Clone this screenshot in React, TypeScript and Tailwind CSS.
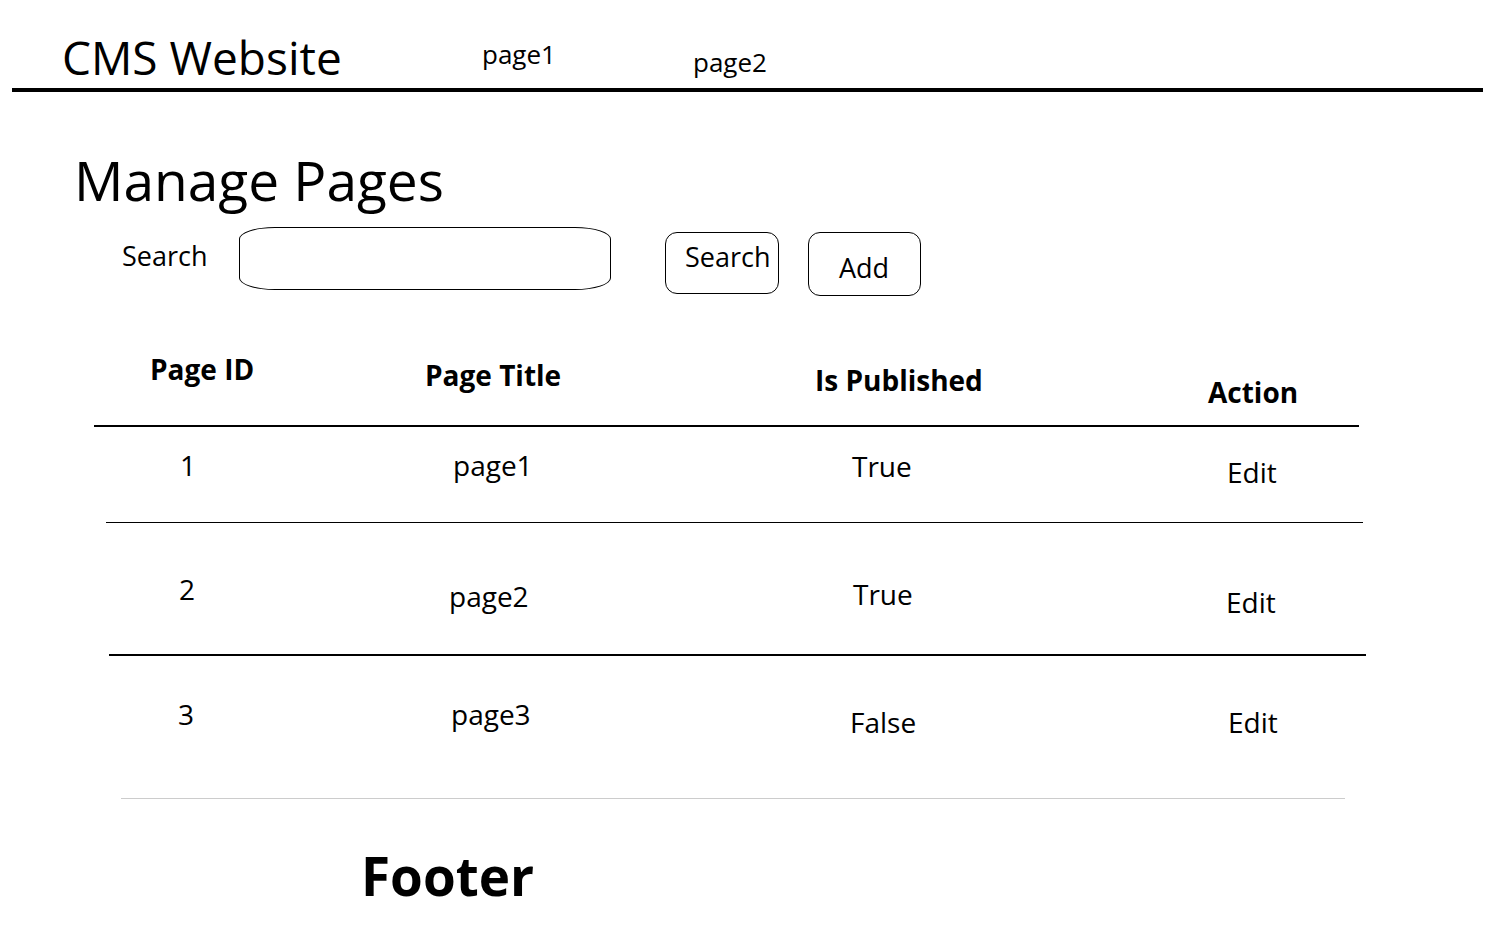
const FONT = { fontFamily: '"Open Sans", "Noto Sans", sans-serif' };

type Cell = { text: string; pl: string; pt: string };

function Row({ cells, height, bold = false }: { cells: Cell[]; height: string; bold?: boolean }) {
  return (
    <div className={`grid grid-cols-[380px_400px_370px_1fr] ${height}`}>
      {cells.map((c, i) => (
        <div key={i} className={`${c.pl} ${c.pt}`}>
          <span className={`text-[28px] leading-none whitespace-nowrap ${bold ? 'font-bold' : ''}`}>{c.text}</span>
        </div>
      ))}
    </div>
  );
}

export default function App() {
  return (
    <div className="w-[1510px] h-[948px] bg-white text-black overflow-hidden" style={FONT}>
      {/* Top bar */}
      <div className="ml-[12px] w-[1471px] h-[92px] border-b-4 border-black flex items-start">
        <div className="w-[470px] pl-[50px] pt-[34px]">
          <span className="text-[46px] leading-none whitespace-nowrap">CMS Website</span>
        </div>
        <div className="w-[211px] pt-[41px]">
          <span className="text-[26px] leading-none">page1</span>
        </div>
        <div className="pt-[49px]">
          <span className="text-[26px] leading-none">page2</span>
        </div>
      </div>

      <h1 className="ml-[74px] mt-[60px] text-[55px] leading-none whitespace-nowrap">Manage Pages</h1>

      {/* Search bar */}
      <div className="mt-[20px] flex items-start">
        <div className="w-[239px] pl-[122px] pt-[15px]">
          <span className="text-[27px] leading-none">Search</span>
        </div>
        <div className="w-[372px] h-[63px] border border-black rounded-[36px/12px]" />
        <button className="ml-[54px] mt-[5px] w-[114px] h-[62px] border border-black rounded-[12px] pl-[19px] pt-[10px] text-left flex items-start">
          <span className="text-[27px] leading-none">Search</span>
        </button>
        <button className="ml-[29px] mt-[5px] w-[113px] h-[64px] border border-black rounded-[12px] pl-[30px] pt-[21px] text-left flex items-start">
          <span className="text-[27px] leading-none">Add</span>
        </button>
      </div>

      {/* Table */}
      <div className="mt-[33px]">
        <Row
          bold
          height="h-[96px]"
          cells={[
            { text: 'Page ID', pl: 'pl-[150px]', pt: 'pt-[26px]' },
            { text: 'Page Title', pl: 'pl-[45px]', pt: 'pt-[32px]' },
            { text: 'Is Published', pl: 'pl-[35px]', pt: 'pt-[37px]' },
            { text: 'Action', pl: 'pl-[58px]', pt: 'pt-[49px]' },
          ]}
        />
        <div className="ml-[94px] w-[1265px] h-[1.5px] bg-black" />
        <Row
          height="h-[95px]"
          cells={[
            { text: '1', pl: 'pl-[180px]', pt: 'pt-[24px]' },
            { text: 'page1', pl: 'pl-[73px]', pt: 'pt-[24px]' },
            { text: 'True', pl: 'pl-[72px]', pt: 'pt-[25px]' },
            { text: 'Edit', pl: 'pl-[77px]', pt: 'pt-[31px]' },
          ]}
        />
        <div className="ml-[106px] w-[1257px] h-[1.5px] bg-black" />
        <Row
          height="h-[131px]"
          cells={[
            { text: '2', pl: 'pl-[179px]', pt: 'pt-[52px]' },
            { text: 'page2', pl: 'pl-[69px]', pt: 'pt-[59px]' },
            { text: 'True', pl: 'pl-[73px]', pt: 'pt-[57px]' },
            { text: 'Edit', pl: 'pl-[76px]', pt: 'pt-[65px]' },
          ]}
        />
        <div className="ml-[109px] w-[1257px] h-[1.5px] bg-black" />
        <Row
          height="h-[142px]"
          cells={[
            { text: '3', pl: 'pl-[178px]', pt: 'pt-[44px]' },
            { text: 'page3', pl: 'pl-[71px]', pt: 'pt-[44px]' },
            { text: 'False', pl: 'pl-[70px]', pt: 'pt-[52px]' },
            { text: 'Edit', pl: 'pl-[78px]', pt: 'pt-[52px]' },
          ]}
        />
        <div className="ml-[121px] w-[1224px] h-[1.5px] bg-[#cccccc]" />
      </div>

      {/* Footer */}
      <div className="ml-[361px] mt-[50px]">
        <span className="text-[53px] font-bold leading-none">Footer</span>
      </div>
    </div>
  );
}
